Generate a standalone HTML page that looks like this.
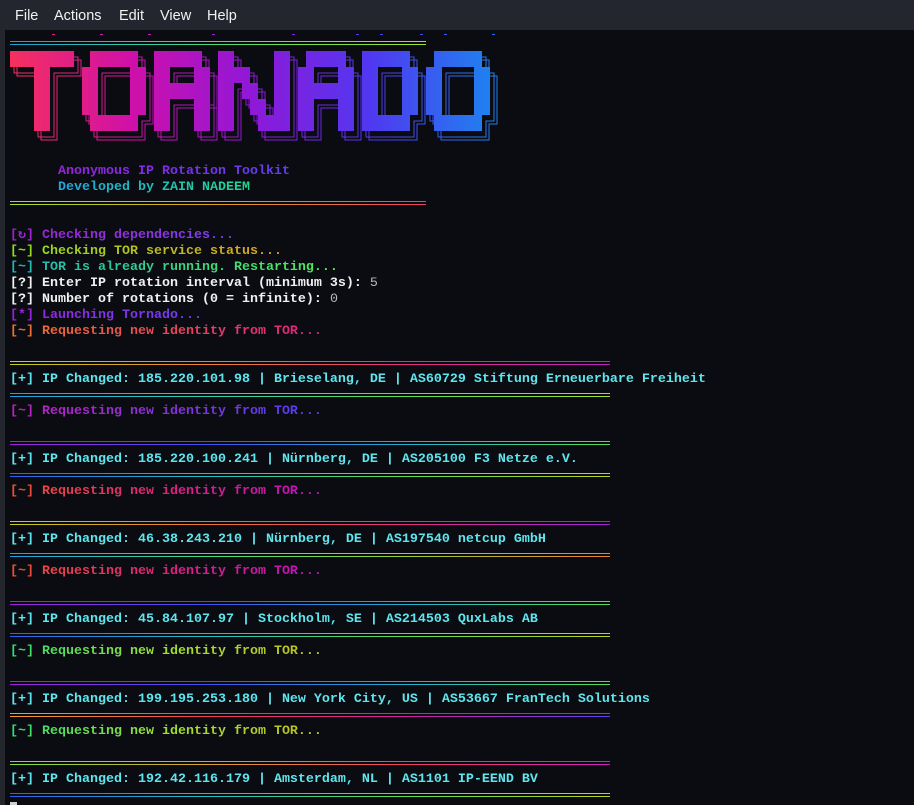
<!DOCTYPE html>
<html><head><meta charset="utf-8">
<style>
*{margin:0;padding:0;box-sizing:border-box}
html,body{width:914px;height:805px;overflow:hidden;background:#23262d}
#menu{position:absolute;left:0;top:0;width:914px;height:30px;background:#23262e;font-family:"Liberation Sans",sans-serif;font-size:14.5px;color:#f2f2f2}
#menu span{position:absolute;top:8px}
#term{position:absolute;left:5px;top:30px;width:909px;height:775px;background:#0a0c12;overflow:hidden}
.r{position:absolute;left:5px;height:16px;line-height:16px;font-family:"Liberation Mono",monospace;font-weight:bold;font-size:13.33px;white-space:pre;margin-top:2px}
.g{-webkit-background-clip:text;background-clip:text;color:transparent}
.sep{position:absolute;left:5px;height:4px;-webkit-mask-image:linear-gradient(#000 0 1px,transparent 1px 3px,#000 3px 4px);mask-image:linear-gradient(#000 0 1px,transparent 1px 3px,#000 3px 4px)}
.w{color:#f0f0f0}.v{color:#b8b8b8;font-weight:normal}
.ip{color:#5ee6ee}
.dot{position:absolute;top:4px;width:3px;height:1px}
</style></head><body>
<div id="menu"><span style="left:15px">File</span><span style="left:54px">Actions</span><span style="left:119px">Edit</span><span style="left:160px">View</span><span style="left:207px">Help</span></div>
<div id="term">
<div class="dot" style="left:47px;background:#e02080"></div>
<div class="dot" style="left:95px;background:#d020b0"></div>
<div class="dot" style="left:143px;background:#c020c0"></div>
<div class="dot" style="left:207px;background:#a020d0"></div>
<div class="dot" style="left:287px;background:#8020e0"></div>
<div class="dot" style="left:351px;background:#5040f0"></div>
<div class="dot" style="left:375px;background:#4848f0"></div>
<div class="dot" style="left:415px;background:#4050f0"></div>
<div class="dot" style="left:439px;background:#3860f0"></div>
<div class="dot" style="left:487px;background:#3070f0"></div>

<svg style="position:absolute;left:-5px;top:-30px" width="520" height="150">
<defs><linearGradient id="lg" x1="10" x2="490" y1="0" y2="0" gradientUnits="userSpaceOnUse">
<stop offset="0" stop-color="#f5305f"/><stop offset="0.25" stop-color="#d010a8"/><stop offset="0.5" stop-color="#9018d8"/><stop offset="0.75" stop-color="#5038f0"/><stop offset="1" stop-color="#2080f0"/></linearGradient>
<g id="logo" fill-rule="evenodd">
<path d="M10 51H74V67H50V131H34V67H10Z"/>
<path d="M90 51H138V67H146V115H138V131H90V115H82V67H90Z M98 67V115H130V67Z"/>
<path d="M154 51H202V67H210V99H202V99H210V131H194V99H170V131H154Z M170 67V83H194V67Z"/>
<path d="M218 51H234V67H250V83H258V99H266V115H274V51H290V131H258V115H250V99H242V83H234V131H218Z"/>
<path d="M306 51H346V67H354V131H338V99H314V131H298V67H306Z M314 67V83H338V67Z"/>
<path d="M362 51H410V67H418V115H410V131H362Z M378 67V115H402V67Z"/>
<path d="M434 51H482V67H490V115H482V131H434V115H426V67H434Z M442 67V115H474V67Z"/>
</g></defs>
<use href="#logo" transform="translate(4,6)" fill="none" stroke="url(#lg)" stroke-width="1"/>
<use href="#logo" transform="translate(7,9)" fill="none" stroke="url(#lg)" stroke-width="1"/>
<use href="#logo" fill="url(#lg)"/>
</svg>

<div class="sep" style="top:11px;width:416px;background:linear-gradient(90deg,#1ea0d0,#30d0a0,#70e050,#a0e030)"></div>
<div class="r g" style="top:132px;left:53px;background-image:linear-gradient(90deg,#9a20e0,#6040f0)">Anonymous IP Rotation Toolkit</div>
<div class="r g" style="top:148px;left:53px;background-image:linear-gradient(90deg,#20a8e0,#20d890)">Developed by ZAIN NADEEM</div>
<div class="sep" style="top:171px;width:416px;background:linear-gradient(90deg,#a0e030,#e0a020,#f04060)"></div>

<div class="r g" style="top:196px;background-image:linear-gradient(90deg,#a020d0,#8040f0)">[↻] Checking dependencies...</div>
<div class="r g" style="top:212px;background-image:linear-gradient(90deg,#90e020,#e0a020)">[~] Checking TOR service status...</div>
<div class="r g" style="top:228px;background-image:linear-gradient(90deg,#20b8b8,#50f050)">[~] TOR is already running. Restarting...</div>
<div class="r w" style="top:244px">[?] Enter IP rotation interval (minimum 3s): <span class="v">5</span></div>
<div class="r w" style="top:260px">[?] Number of rotations (0 = infinite): <span class="v">0</span></div>
<div class="r g" style="top:276px;background-image:linear-gradient(90deg,#9a20e0,#7040f0)">[*] Launching Tornado...</div>
<div class="r g" style="top:292px;background-image:linear-gradient(90deg,#f07030,#e02080)">[~] Requesting new identity from TOR...</div>

<div class="sep" style="top:331px;width:600px;background:linear-gradient(90deg,#c0d020,#f08030,#e03080,#c020c0)"></div>
<div class="r ip" style="top:340px">[+] IP Changed: 185.220.101.98 | Brieselang, DE | AS60729 Stiftung Erneuerbare Freiheit</div>
<div class="sep" style="top:363px;width:600px;background:linear-gradient(90deg,#20a0e0,#30d0b0,#60e050,#a0e030)"></div>
<div class="r g" style="top:372px;background-image:linear-gradient(90deg,#c020c0,#5040f0)">[~] Requesting new identity from TOR...</div>

<div class="sep" style="top:411px;width:600px;background:linear-gradient(90deg,#a020e0,#4050f0,#20b0d0,#50e050)"></div>
<div class="r ip" style="top:420px">[+] IP Changed: 185.220.100.241 | Nürnberg, DE | AS205100 F3 Netze e.V.</div>
<div class="sep" style="top:443px;width:600px;background:linear-gradient(90deg,#3060f0,#20c0c0,#60e050,#c0d020)"></div>
<div class="r g" style="top:452px;background-image:linear-gradient(90deg,#f05030,#e02080,#c010c0)">[~] Requesting new identity from TOR...</div>

<div class="sep" style="top:491px;width:600px;background:linear-gradient(90deg,#c0d020,#f07030,#e03080,#a020e0)"></div>
<div class="r ip" style="top:500px">[+] IP Changed: 46.38.243.210 | Nürnberg, DE | AS197540 netcup GmbH</div>
<div class="sep" style="top:523px;width:600px;background:linear-gradient(90deg,#20a0e0,#40e080,#a0d030,#f08030)"></div>
<div class="r g" style="top:532px;background-image:linear-gradient(90deg,#f05030,#e02080,#c010c0)">[~] Requesting new identity from TOR...</div>

<div class="sep" style="top:571px;width:600px;background:linear-gradient(90deg,#a020e0,#4050f0,#20b0d0,#50e050)"></div>
<div class="r ip" style="top:580px">[+] IP Changed: 45.84.107.97 | Stockholm, SE | AS214503 QuxLabs AB</div>
<div class="sep" style="top:603px;width:600px;background:linear-gradient(90deg,#3060f0,#20c0c0,#60e050,#c0d020)"></div>
<div class="r g" style="top:612px;background-image:linear-gradient(90deg,#30e070,#a0e030,#c0c020)">[~] Requesting new identity from TOR...</div>

<div class="sep" style="top:651px;width:600px;background:linear-gradient(90deg,#a020e0,#4050f0,#20b0d0,#50e050)"></div>
<div class="r ip" style="top:660px">[+] IP Changed: 199.195.253.180 | New York City, US | AS53667 FranTech Solutions</div>
<div class="sep" style="top:683px;width:600px;background:linear-gradient(90deg,#f0a030,#f04050,#d020a0,#6040f0)"></div>
<div class="r g" style="top:692px;background-image:linear-gradient(90deg,#30e070,#a0e030,#c0c020)">[~] Requesting new identity from TOR...</div>

<div class="sep" style="top:731px;width:600px;background:linear-gradient(90deg,#80e040,#e0a030,#f04060,#d020c0)"></div>
<div class="r ip" style="top:740px">[+] IP Changed: 192.42.116.179 | Amsterdam, NL | AS1101 IP-EEND BV</div>
<div class="sep" style="top:763px;width:600px;background:linear-gradient(90deg,#3060f0,#20c0c0,#60e050,#c0d020)"></div>
<div style="position:absolute;left:5px;top:772px;width:7px;height:3px;background:#d0d0d0"></div>
</div>
</body></html>
